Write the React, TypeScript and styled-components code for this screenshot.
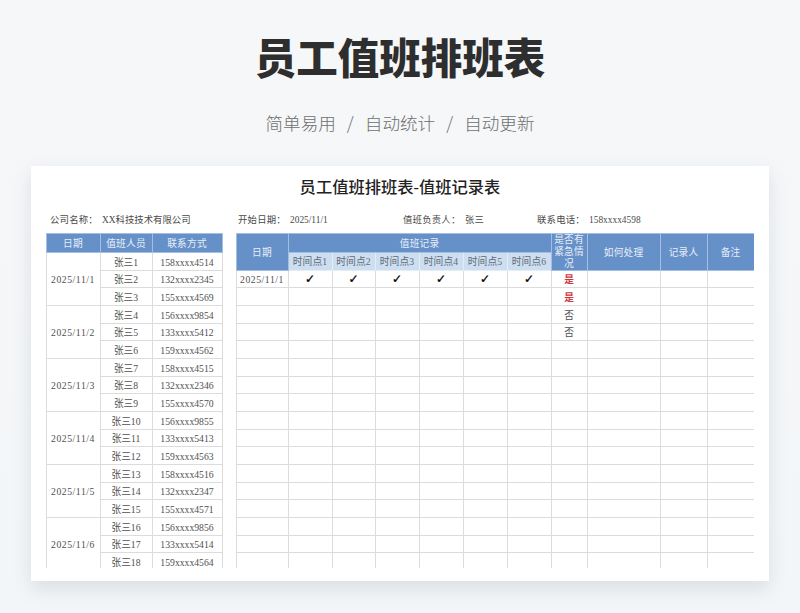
import React from "react";
import styled, { createGlobalStyle } from "styled-components";

const GlobalStyle = createGlobalStyle`
  html, body {
    margin: 0;
    padding: 0;
    height: 613px;
    overflow: hidden;
    background: linear-gradient(180deg, #f6f7f9 0%, #f3f6f8 100%);
  }
`;

const TABLE_FONT = `"Liberation Serif", "Noto Sans CJK SC", serif`;

const Page = styled.div`
  width: 800px;
  height: 613px;
  display: flex;
  flex-direction: column;
  align-items: center;
  font-family: "Noto Sans CJK SC", "Liberation Sans", sans-serif;
`;

const Heading = styled.h1`
  margin: 26px 0 0;
  height: 60px;
  line-height: 60px;
  font-size: 41.5px;
  font-weight: 900;
  color: #2e2e2e;
`;

const Tagline = styled.div`
  margin-top: 24px;
  height: 26px;
  line-height: 26px;
  font-size: 17.6px;
  font-weight: 300;
  color: #6f6f6f;
  display: flex;
  gap: 11px;
`;

const Card = styled.section`
  margin-top: 30px;
  width: 738px;
  height: 415px;
  box-sizing: border-box;
  padding: 13px 15px 13px;
  background: #fff;
  box-shadow: 0 8px 18px rgba(70, 85, 100, 0.14);
  display: flex;
  flex-direction: column;
`;

const SheetTitle = styled.h2`
  margin: 0;
  height: 18px;
  line-height: 18px;
  text-align: center;
  font-size: 16.3px;
  font-weight: 500;
  color: #222;
  font-family: ${TABLE_FONT};
`;

const MetaRow = styled.div`
  margin-top: 13px;
  height: 18px;
  padding-left: 4px;
  display: grid;
  grid-template-columns: 188px 165px 134px 1fr;
  align-items: center;
  font-family: ${TABLE_FONT};
  font-size: 9.4px;
  color: #4a4a4a;
`;

const MetaItem = styled.div`
  display: flex;
  align-items: baseline;
  gap: 4px;
  white-space: nowrap;
`;

const MetaLabel = styled.span<{ $width: number }>`
  width: ${(p) => p.$width}px;
  letter-spacing: 0.2px;
`;

const Sheets = styled.div`
  margin-top: 5px;
  margin-left: -0.5px;
  height: 335px;
  overflow: hidden;
  display: flex;
`;

const Divider = styled.div`
  width: 1px;
  margin: 0 8px 0 5px;
  background: #e4e4e4;
`;

const Table = styled.table<{ $width: number }>`
  width: ${(p) => p.$width}px;
  flex: none;
  align-self: flex-start;
  table-layout: fixed;
  border-collapse: collapse;
  font-family: ${TABLE_FONT};
  font-size: 9.7px;
  line-height: 11.4px;
  color: #4f4f4f;
`;

const Head = styled.th<{ $light?: boolean }>`
  padding: 1px 0 0;
  font-weight: 400;
  text-align: center;
  letter-spacing: 0.2px;
  color: ${(p) => (p.$light ? "#5f6b78" : "#e6eef8")};
  background: ${(p) => (p.$light ? "#cddef0" : "#6690c8")};
  border: 1px solid ${(p) => (p.$light ? "#e3edf7" : "#a3bfe2")};
`;

const UrgentHead = styled(Head)`
  padding: 0;
  line-height: 11.8px;
`;

const Cell = styled.td<{ $urgent?: boolean }>`
  padding: 2px 0 0;
  text-align: center;
  white-space: nowrap;
  border: 1px solid #dcdcdc;
  font-weight: ${(p) => (p.$urgent ? 700 : 400)};
  color: ${(p) => (p.$urgent ? "#d0343a" : "inherit")};
`;

const DateCell = styled(Cell)`
  letter-spacing: 0.55px;
`;

const Tick = styled.span`
  font-family: "DejaVu Sans", sans-serif;
  font-size: 12px;
  line-height: 11px;
  font-weight: 700;
  color: #000;
  -webkit-text-stroke: 0.3px #000;
`;

const Row = styled.tr<{ $height: number }>`
  height: ${(p) => p.$height}px;
`;

const staff = [
  "158xxxx4514",
  "132xxxx2345",
  "155xxxx4569",
  "156xxxx9854",
  "133xxxx5412",
  "159xxxx4562",
  "158xxxx4515",
  "132xxxx2346",
  "155xxxx4570",
  "156xxxx9855",
  "133xxxx5413",
  "159xxxx4563",
  "158xxxx4516",
  "132xxxx2347",
  "155xxxx4571",
  "156xxxx9856",
  "133xxxx5414",
  "159xxxx4564",
];

const leftCols = [54, 52, 70];
const rightCols = [52, 44, 43, 44, 44, 44, 44, 36, 73, 47, 47];
const timePoints = [1, 2, 3, 4, 5, 6];
const urgent = ["是", "是", "否", "否"];

// rows in the source sheet land on 17.67px steps, so heights go 18/17/18
const rowHeight = (i: number) => (i % 3 === 1 ? 17 : 18);

const App: React.FC = () => {
  return (
    <Page>
      <GlobalStyle />
      <Heading>员工值班排班表</Heading>
      <Tagline>
        <span>简单易用</span>
        <span>/</span>
        <span>自动统计</span>
        <span>/</span>
        <span>自动更新</span>
      </Tagline>
      <Card>
        <SheetTitle>员工值班排班表-值班记录表</SheetTitle>
        <MetaRow>
          <MetaItem>
            <MetaLabel $width={48}>公司名称：</MetaLabel>
            <span>XX科技技术有限公司</span>
          </MetaItem>
          <MetaItem>
            <MetaLabel $width={48}>开始日期：</MetaLabel>
            <span>2025/11/1</span>
          </MetaItem>
          <MetaItem>
            <MetaLabel $width={58}>值班负责人：</MetaLabel>
            <span>张三</span>
          </MetaItem>
          <MetaItem>
            <MetaLabel $width={48}>联系电话：</MetaLabel>
            <span>158xxxx4598</span>
          </MetaItem>
        </MetaRow>
        <Sheets>
          <Table $width={176}>
            <colgroup>
              {leftCols.map((w, i) => (
                <col key={i} width={w} />
              ))}
            </colgroup>
            <thead>
              <Row $height={19}>
                <Head>日期</Head>
                <Head>值班人员</Head>
                <Head>联系方式</Head>
              </Row>
            </thead>
            <tbody>
              {staff.map((phone, i) => (
                <Row key={phone} $height={rowHeight(i)}>
                  {i % 3 === 0 && (
                    <DateCell rowSpan={3}>2025/11/{i / 3 + 1}</DateCell>
                  )}
                  <Cell>张三{i + 1}</Cell>
                  <Cell>{phone}</Cell>
                </Row>
              ))}
            </tbody>
          </Table>
          <Divider />
          <Table $width={518}>
            <colgroup>
              {rightCols.map((w, i) => (
                <col key={i} width={w} />
              ))}
            </colgroup>
            <thead>
              <Row $height={19}>
                <Head rowSpan={2}>日期</Head>
                <Head colSpan={6}>值班记录</Head>
                <UrgentHead rowSpan={2}>是否有紧急情况</UrgentHead>
                <Head rowSpan={2}>如何处理</Head>
                <Head rowSpan={2}>记录人</Head>
                <Head rowSpan={2}>备注</Head>
              </Row>
              <Row $height={18}>
                {timePoints.map((n) => (
                  <Head key={n} $light>
                    时间点{n}
                  </Head>
                ))}
              </Row>
            </thead>
            <tbody>
              {Array.from({ length: 17 }, (_, i) => (
                <Row key={i} $height={rowHeight(i + 1)}>
                  {i === 0 ? <DateCell>2025/11/1</DateCell> : <Cell />}
                  {timePoints.map((n) => (
                    <Cell key={n}>{i === 0 && <Tick>✓</Tick>}</Cell>
                  ))}
                  <Cell $urgent={urgent[i] === "是"}>{urgent[i]}</Cell>
                  <Cell />
                  <Cell />
                  <Cell />
                </Row>
              ))}
            </tbody>
          </Table>
        </Sheets>
      </Card>
    </Page>
  );
};

export default App;
